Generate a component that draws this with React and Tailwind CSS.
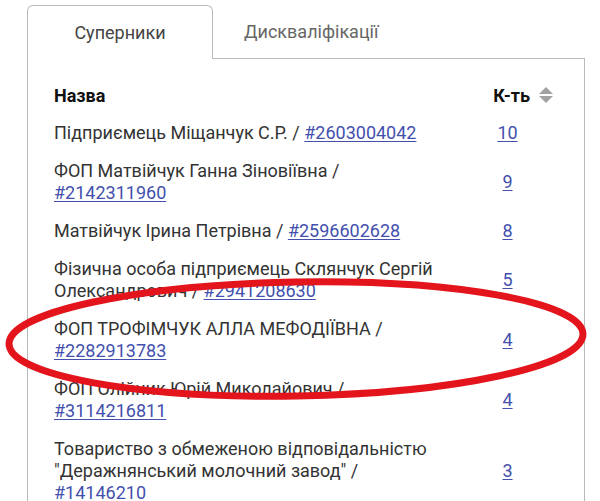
import React from "react";

const rows = [
  { name: "Підприємець Міщанчук С.Р.", code: "#2603004042", count: 10 },
  { name: "ФОП Матвійчук Ганна Зіновіївна", code: "#2142311960", count: 9 },
  { name: "Матвійчук Ірина Петрівна", code: "#2596602628", count: 8 },
  { name: "Фізична особа підприємець Склянчук Сергій Олександрович", code: "#2941208630", count: 5 },
  { name: "ФОП ТРОФІМЧУК АЛЛА МЕФОДІЇВНА", code: "#2282913783", count: 4 },
  { name: "ФОП Олійник Юрій Миколайович", code: "#3114216811", count: 4 },
  { name: "Товариство з обмеженою відповідальністю \"Деражнянський молочний завод\"", code: "#14146210", count: 3 },
];

const SortIcon = () => (
  <svg width="14" height="17" viewBox="0 0 14 17" className="ml-[9px]">
    <path d="M7 0 L14 7 L0 7 Z" fill="#a3a3a3" />
    <path d="M0 9 L14 9 L7 16 Z" fill="#a3a3a3" />
  </svg>
);

export default function App() {
  return (
    <div className="relative h-[501px] w-[600px] overflow-hidden bg-white font-['Roboto',sans-serif] text-[18px] text-[#333]">
      <div className="pl-[27px] pr-[15px] pt-[5px]">
        <div className="flex h-[54px] items-stretch">
          <div className="flex w-[186px] items-center justify-center rounded-t-[6px] border border-b-0 border-[#b9b9b9] bg-white text-[#444]">
            Суперники
          </div>
          <div className="flex flex-1 items-center border-b border-[#b9b9b9] pl-[31px] text-[#666]">
            Дискваліфікації
          </div>
        </div>
        <div className="h-[460px] border-x border-[#b9b9b9] pl-[26px] pr-[29px] pt-[18px]">
          <div className="grid grid-cols-[390px_1fr] gap-x-[16px] leading-[22px]">
            <div className="flex h-[37px] items-center font-bold text-[#111]">Назва</div>
            <div className="flex h-[37px] items-center justify-end pr-[2px] font-bold text-[#111]">
              К-ть
              <SortIcon />
            </div>
            {rows.map((r, i) => (
              <React.Fragment key={i}>
                <div className="py-[8px]">
                  {r.name} /{" "}
                  <a href="#" className="text-[#4350ad] underline underline-offset-2">
                    {r.code}
                  </a>
                </div>
                <div className="flex items-center justify-center py-[8px]">
                  <a href="#" className="text-[#4350ad] underline underline-offset-2">
                    {r.count}
                  </a>
                </div>
              </React.Fragment>
            ))}
          </div>
        </div>
      </div>
      <svg
        className="pointer-events-none absolute left-0 top-0"
        width="600"
        height="501"
        viewBox="0 0 600 501"
      >
        <ellipse
          cx="296"
          cy="339"
          rx="287"
          ry="57"
          transform="rotate(-1 296 339)"
          fill="none"
          stroke="#e3141c"
          strokeWidth="7"
        />
      </svg>
    </div>
  );
}
